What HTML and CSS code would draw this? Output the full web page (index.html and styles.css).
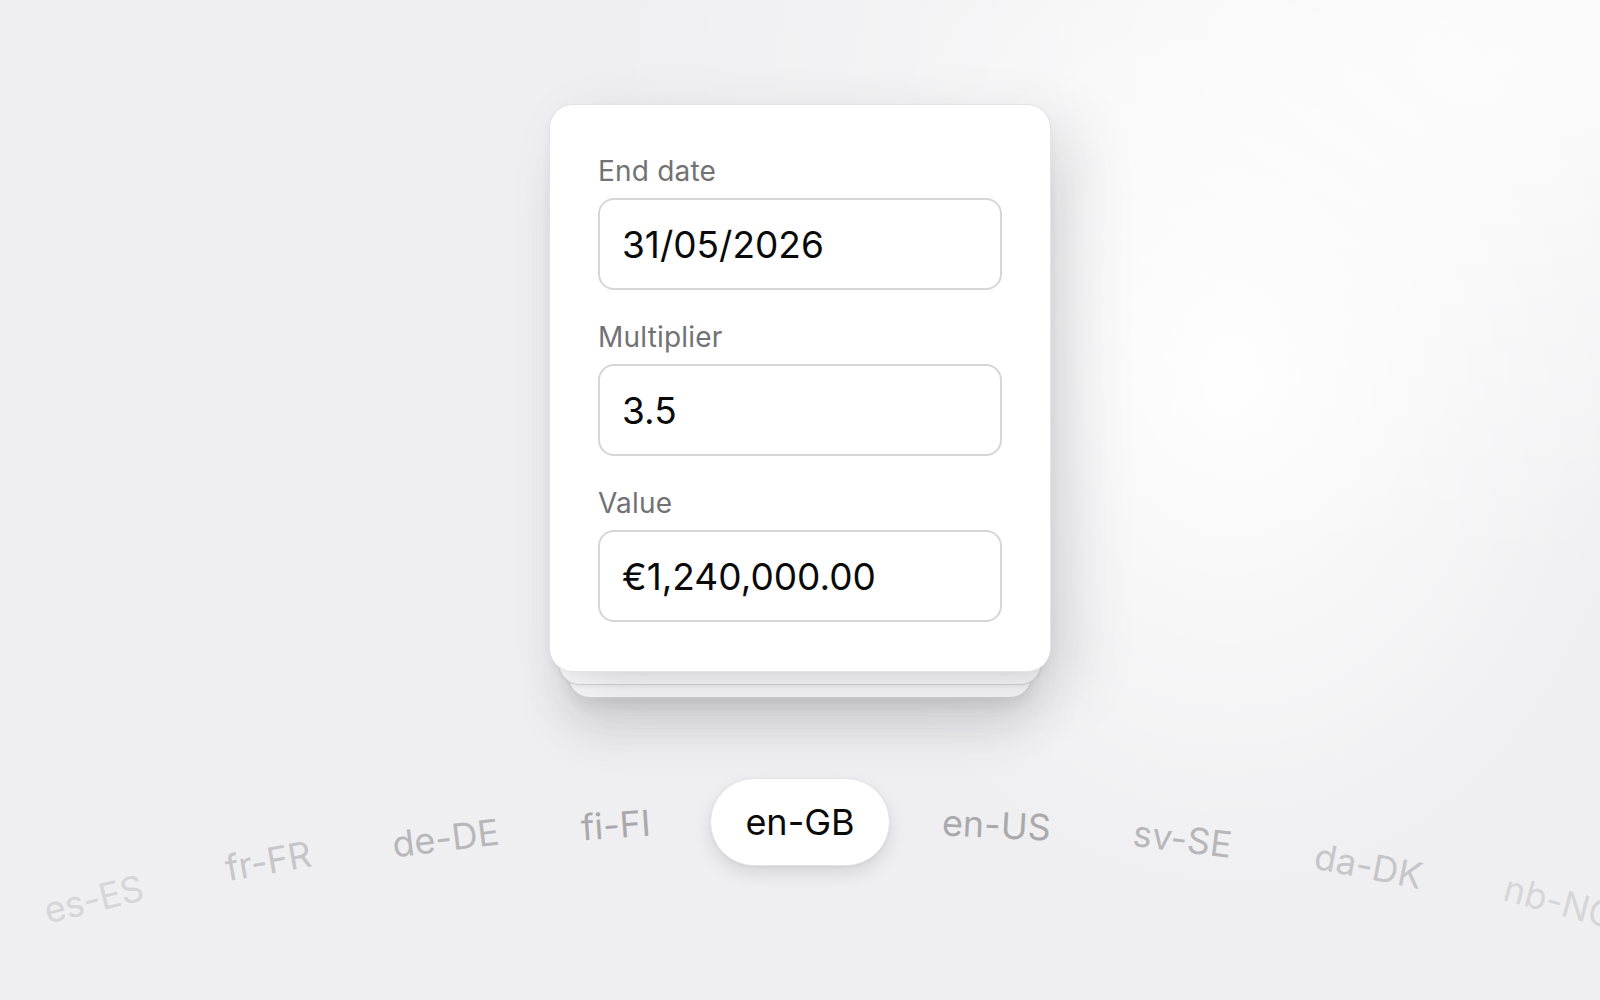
FILE: index.html
```html
<!DOCTYPE html>
<html lang="en">

<head>
    <meta charset="UTF-8">
    <meta name="viewport" content="width=device-width, initial-scale=1.0">
    <title>Locale formatting</title>
    <link rel="stylesheet" href="styles.css">
</head>

<body>
    <main class="stage">
        <div class="stack">
            <form class="card">
                <div class="field">
                    <label for="end-date">End date</label>
                    <div class="input" id="end-date">31/05/2026</div>
                </div>
                <div class="field">
                    <label for="multiplier">Multiplier</label>
                    <div class="input" id="multiplier">3.5</div>
                </div>
                <div class="field">
                    <label for="value">Value</label>
                    <div class="input" id="value">€1,240,000.00</div>
                </div>
            </form>
        </div>

        <div class="wheel">
            <div class="side left">
                <span class="locale far-4">es-ES</span>
                <span class="locale far-3">fr-FR</span>
                <span class="locale far-2">de-DE</span>
                <span class="locale far-1">fi-FI</span>
            </div>
            <span class="locale active">en-GB</span>
            <div class="side right">
                <span class="locale far-1">en-US</span>
                <span class="locale far-2">sv-SE</span>
                <span class="locale far-3">da-DK</span>
                <span class="locale far-4">nb-NO</span>
            </div>
        </div>
    </main>
</body>

</html>
```

FILE: styles.css
```css
html,
body {
    margin: 0;
    padding: 0;
    height: 100%;
    overflow: hidden;
    font-family: 'Inter', 'Liberation Sans', sans-serif;
    background:
        radial-gradient(ellipse 420px 520px at 1230px 380px, rgba(255, 255, 255, 0.95), rgba(255, 255, 255, 0) 100%),
        radial-gradient(ellipse 900px 500px at 1500px 60px, rgba(255, 255, 255, 0.8), rgba(255, 255, 255, 0) 100%),
        #efeff1;
}

.stage {
    display: flex;
    flex-direction: column;
    align-items: center;
    padding-top: 104px;
}

.stack {
    position: relative;
    isolation: isolate;
}

/* the two cards peeking out under the front one */
.stack::before,
.stack::after {
    content: '';
    position: absolute;
    z-index: -1;
    border-radius: 22px;
    background: #f8f8fa;
    border: 1px solid #d3d3d7;
}

.stack::before {
    left: 9px;
    right: 9px;
    top: 20px;
    bottom: -13px;
    box-shadow: 0 2px 3px rgba(0, 0, 0, 0.05);
}

.stack::after {
    left: 19px;
    right: 19px;
    top: 40px;
    bottom: -26px;
    z-index: -2;
    box-shadow: 0 30px 50px rgba(60, 60, 70, 0.16), 0 8px 14px rgba(0, 0, 0, 0.06);
}

.card {
    position: relative;
    width: 404px;
    padding: 50px 48px 49px;
    background: #fff;
    border: 1px solid #e3e3e6;
    border-radius: 24px;
    box-shadow: 24px 20px 60px rgba(60, 60, 70, 0.15), 0 4px 10px rgba(0, 0, 0, 0.04);
    display: flex;
    flex-direction: column;
    gap: 31px;
}

.field {
    display: flex;
    flex-direction: column;
    gap: 11px;
}

.field label {
    font-size: 28px;
    line-height: 32px;
    letter-spacing: 0.2px;
    color: #727275;
}

.input {
    height: 88px;
    border: 2px solid #d6d6d9;
    border-radius: 16px;
    padding: 0 22px;
    display: flex;
    align-items: center;
    font-size: 37px;
    color: #0a0a0a;
}

.wheel {
    align-self: stretch;
    display: grid;
    grid-template-columns: 1fr auto 1fr;
    align-items: center;
    margin-top: 106px;
}

.side {
    display: flex;
    gap: 18px;
    min-width: 0;
}

.side.left {
    justify-content: flex-end;
    margin-right: 18px;
}

.side.right {
    justify-content: flex-start;
    margin-left: 18px;
}

.locale {
    padding: 0 34px;
    font-size: 36px;
    line-height: 86px;
    white-space: nowrap;
    color: #a9a9ad;
}

.locale.active {
    background: #fff;
    color: #0a0a0a;
    border: 1px solid #e4e4e7;
    border-radius: 44px;
    box-shadow: 0 8px 18px rgba(0, 0, 0, 0.1), 0 1px 3px rgba(0, 0, 0, 0.06);
}

.left .far-1 { transform: translate(-8px, 3px) rotate(-4deg); color: #a9a9ad; }
.left .far-2 { transform: translate(-4px, 16px) rotate(-7deg); color: #b7b7bb; }
.left .far-3 { transform: translate(2px, 39px) rotate(-10deg); color: #c6c6ca; }
.left .far-4 { transform: translate(7px, 77px) rotate(-14deg); color: #d6d6d9; }

.right .far-1 { transform: translateY(3px) rotate(3deg); color: #a9a9ad; }
.right .far-2 { transform: translate(-3px, 17px) rotate(7deg); color: #b7b7bb; }
.right .far-3 { transform: translate(-7px, 44px) rotate(11deg); color: #c6c6ca; }
.right .far-4 { transform: translate(-13px, 80px) rotate(15deg); color: #d6d6d9; }
```
